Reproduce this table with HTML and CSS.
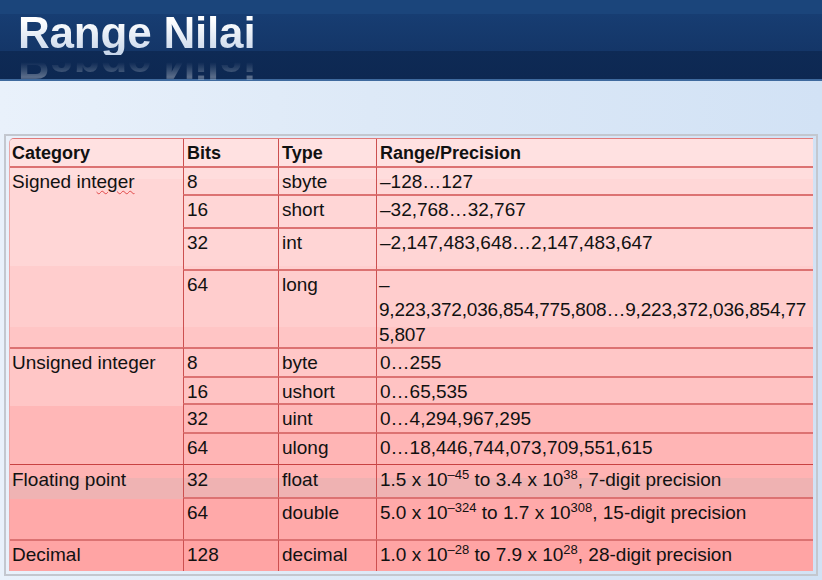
FILE: index.html
```html
<!DOCTYPE html>
<html lang="id">
<head>
<meta charset="utf-8">
<title>Range Nilai</title>
<link rel="stylesheet" href="styles.css">
</head>
<body>
<div class="slide">
  <header class="titlebar">
    <h1 class="title">Range Nilai</h1>
  </header>
  <main class="content">
    <div class="frame">
      <div class="grid" role="table">
        <div class="c h first" role="columnheader">Category</div>
        <div class="c h" role="columnheader">Bits</div>
        <div class="c h" role="columnheader">Type</div>
        <div class="c h" role="columnheader">Range/Precision</div>

        <div class="c first span4 m-signed">Signed int<span class="squiggle">eger</span></div>
        <div class="c r-sbyte">8</div>
        <div class="c r-sbyte">sbyte</div>
        <div class="c r-sbyte">–128…127</div>

        <div class="c r-short">16</div>
        <div class="c r-short">short</div>
        <div class="c r-short">–32,768…32,767</div>

        <div class="c r-int">32</div>
        <div class="c r-int">int</div>
        <div class="c r-int">–2,147,483,648…2,147,483,647</div>

        <div class="c r-long">64</div>
        <div class="c r-long">long</div>
        <div class="c r-long tight">–<br>9,223,372,036,854,775,808…9,223,372,036,854,77<br>5,807</div>

        <div class="c first span4 m-unsigned">Unsigned integer</div>
        <div class="c r-byte">8</div>
        <div class="c r-byte">byte</div>
        <div class="c r-byte">0…255</div>

        <div class="c r-ushort">16</div>
        <div class="c r-ushort">ushort</div>
        <div class="c r-ushort">0…65,535</div>

        <div class="c r-uint">32</div>
        <div class="c r-uint">uint</div>
        <div class="c r-uint">0…4,294,967,295</div>

        <div class="c r-ulong">64</div>
        <div class="c r-ulong">ulong</div>
        <div class="c r-ulong">0…18,446,744,073,709,551,615</div>

        <div class="c first span2 m-float group">Floating point</div>
        <div class="c r-float group">32</div>
        <div class="c r-float group">float</div>
        <div class="c r-float group">1.5 x 10<sup>–45</sup> to 3.4 x 10<sup>38</sup>, 7-digit precision</div>

        <div class="c r-double">64</div>
        <div class="c r-double">double</div>
        <div class="c r-double">5.0 x 10<sup>–324</sup> to 1.7 x 10<sup>308</sup>, 15-digit precision</div>

        <div class="c first r-decimal">Decimal</div>
        <div class="c r-decimal">128</div>
        <div class="c r-decimal">decimal</div>
        <div class="c r-decimal">1.0 x 10<sup>–28</sup> to 7.9 x 10<sup>28</sup>, 28-digit precision</div>
      </div>
    </div>
  </main>
</div>
</body>
</html>
```

FILE: styles.css
```css
* { box-sizing: border-box; }

html, body {
  margin: 0;
  padding: 0;
}

body {
  width: 822px;
  height: 580px;
  overflow: hidden;
  font-family: "Liberation Sans", Arial, sans-serif;
  background: linear-gradient(90deg, #e9f1fb 0%, #dde9f7 45%, #d2e2f5 100%);
}

.slide {
  width: 822px;
  height: 580px;
  display: flex;
  flex-direction: column;
}

.titlebar {
  height: 81px;
  padding: 11px 0 0 18px;
  background: linear-gradient(#1b457b 0, #1b457b 14px, #173d72 14px, #143668 51px, #0e2a55 51px, #0d2852 79px);
  border-bottom: 2px solid #3f6a9e;
}

.title {
  margin: 0;
  display: inline-block;
  font-family: "Liberation Sans", Arial, sans-serif;
  font-weight: bold;
  font-size: 44px;
  line-height: 44px;
  letter-spacing: -0.2px;
  color: #eef3fa;
  background: linear-gradient(#ffffff 20%, #c6d5ea 100%);
  -webkit-background-clip: text;
  background-clip: text;
  -webkit-text-fill-color: transparent;
  -webkit-box-reflect: below -14px linear-gradient(rgba(255,255,255,0) 0%, rgba(255,255,255,0.32) 18%, rgba(255,255,255,0) 52%);
}

.content {
  flex: 1;
  padding: 53px 4px 0 4px;
}

.frame {
  width: 814px;
  height: 442px;
  border: 2px solid #c3c7cf;
  padding: 2px 3px 1px 3px;
}

.grid {
  display: grid;
  grid-template-columns: 173px 95px 98px 438px;
  grid-template-rows: 27px 28px 33px 42px 78px 29px 27px 29px 32px 33px 42px 32px;
  border-top: 1px solid #e07a7a;
  border-left: 1px solid #eaa6a6;
  border-top-left-radius: 5px;
  overflow: hidden;
  color: #111111;
  font-size: 19px;
  line-height: 25px;
}

.c {
  border-top: 2px solid #dc7272;
  border-left: 1px solid #cc5050;
  padding: 1px 0 0 3px;
  white-space: nowrap;
}

.c.first { border-left: 0; padding-left: 2px; }

.c.tight { letter-spacing: -0.2px; padding-left: 2px; }

.c.h {
  border-top: 0;
  padding-top: 2px;
  font-weight: bold;
  font-size: 18px;
  background: #ffe1e1;
}

.c.group { border-top: 1px solid #c84242; padding-top: 2px; }

.span4 { grid-row: span 4; }
.span2 { grid-row: span 2; }

.squiggle {
  text-decoration: underline wavy #e04848;
  text-decoration-thickness: 1px;
  text-underline-offset: 2px;
}

sup {
  font-size: 13px;
  line-height: 0;
  vertical-align: 7px;
}

.m-signed {
  background: linear-gradient(#ffdddd 0, #ffdddd 11px, #ffd6d6 11px, #ffd6d6 98px, #ffcdcd 98px, #ffcdcd 159px, #ffc5c5 159px);
}
.m-unsigned {
  background: linear-gradient(#ffc6c6 0, #ffc6c6 57px, #ffb7b7 57px);
}
.m-float {
  background: linear-gradient(#ffb3b3 0, #ffb3b3 13px, #efb3b3 13px, #efb3b3 34px, #ffa9a9 34px);
}

.r-sbyte { background: linear-gradient(#ffdddd 0, #ffdddd 11px, #ffd7d7 11px); }
.r-short { background: #ffd6d6; }
.r-int { background: linear-gradient(#ffd5d5 0, #ffd5d5 37px, #ffcfcf 37px); }
.r-long { background: linear-gradient(#ffcdcd 0, #ffcdcd 56px, #ffc5c5 56px); }
.r-byte { background: #ffc7c7; }
.r-ushort { background: #ffc3c3; }
.r-uint { background: #ffb9b9; }
.r-ulong { background: #ffb5b5; }
.r-float { background: linear-gradient(#ffb3b3 0, #ffb3b3 13px, #efb2b2 13px); }
.r-double { background: #ffa9a9; }
.r-decimal { background: #ffa4a4; }
```
